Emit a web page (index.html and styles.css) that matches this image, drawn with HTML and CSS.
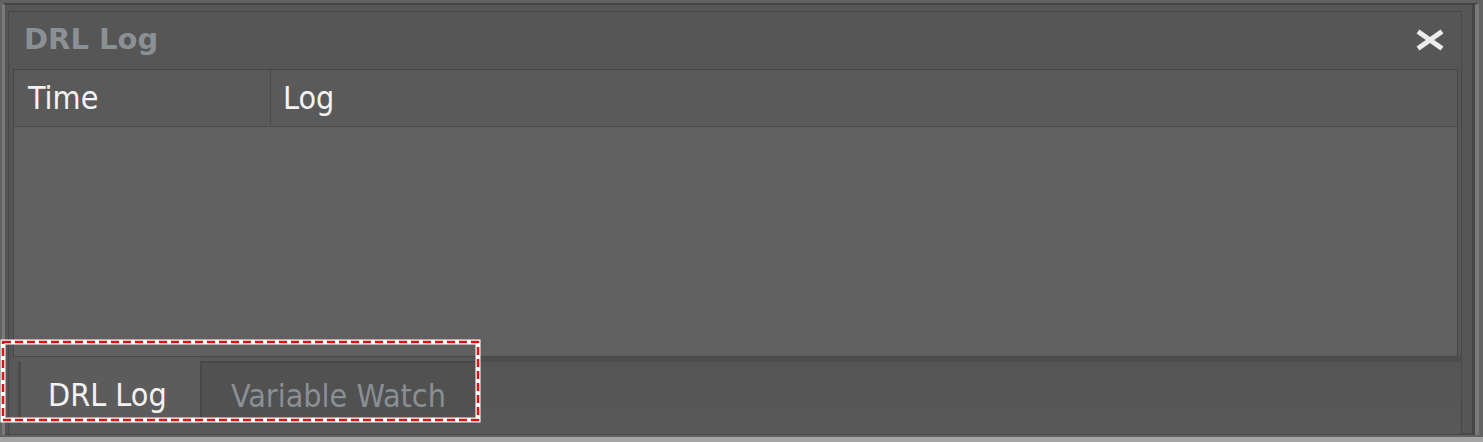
FILE: index.html
```html
<!DOCTYPE html>
<html lang="en">
<head>
<meta charset="utf-8">
<title>DRL Log</title>
<link rel="stylesheet" href="styles.css">
</head>
<body>
<div class="screen">
  <div class="frame">
    <div class="panel">
      <div class="titlebar">
        <span class="title">DRL Log</span>
        <span class="close" aria-label="Close">
          <svg width="32" height="22" viewBox="0 0 32 22">
            <path d="M4 2.5 L28 19.5 M28 2.5 L4 19.5" stroke="#ececec" stroke-width="5" stroke-linecap="butt" fill="none"/>
          </svg>
        </span>
      </div>
      <div class="table">
        <div class="thead">
          <div class="th th-time">Time</div>
          <div class="th th-log">Log</div>
        </div>
        <div class="tbody"></div>
      </div>
      <div class="tabstrip">
        <div class="tab tab-active">DRL Log</div>
        <div class="tab tab-inactive">Variable Watch</div>
        <div class="tab-rest"></div>
      </div>
    </div>
  </div>
  <svg class="annot" width="481" height="84" viewBox="0 0 481 84">
    <rect x="3" y="3" width="475" height="78" fill="none" stroke="#ffffff" stroke-width="5"/>
    <rect x="3" y="3" width="475" height="78" fill="none" stroke="#e01010" stroke-width="2.5" stroke-dasharray="8 4"/>
  </svg>
</div>
</body>
</html>
```

FILE: styles.css
```css
html, body {
  margin: 0;
  padding: 0;
  background: #5e5e5e;
}
body {
  font-family: "DejaVu Sans Condensed", "DejaVu Sans", "Noto Sans", sans-serif;
  font-stretch: condensed;
}
.screen {
  position: relative;
  width: 1483px;
  height: 442px;
  box-sizing: border-box;
  background: #626262;
  padding: 3px 4px 0 2px;
  border-bottom: 5px solid #a4a4a4;
  overflow: hidden;
}
.frame {
  height: 432px;
  box-sizing: border-box;
  background: #565656;
  border-top: 2px solid #454545;
  border-left: 3px solid #7a7a7a;
  border-right: 4px solid #7a7a7a;
  box-shadow: inset -3px 0 0 #464646, inset 0 -2px 0 #4a4a4a;
  padding: 6px 13px 0 3px;
}
.panel {
  display: flex;
  flex-direction: column;
  height: 424px;
  box-sizing: border-box;
  border: 1px solid #474747;
  background: #565656;
}
.titlebar {
  height: 57px;
  flex: none;
  display: flex;
  align-items: center;
  justify-content: space-between;
  padding: 0 15px 0 15px;
  box-sizing: border-box;
}
.title {
  font-family: "DejaVu Sans", "Noto Sans", sans-serif;
  font-stretch: normal;
  font-weight: bold;
  font-size: 29px;
  color: #8b9095;
  position: relative;
  top: -2px;
}
.close {
  display: flex;
  position: relative;
  top: -1px;
  filter: blur(0.6px);
}
.table {
  flex: none;
  margin: 0 3px 0 4px;
  height: 288px;
  box-sizing: border-box;
  border: 1px solid #474747;
  display: flex;
  flex-direction: column;
  background: #606060;
}
.thead {
  display: flex;
  height: 57px;
  flex: none;
  box-sizing: border-box;
  background: #5a5a5a;
  border-bottom: 1px solid #4b4b4b;
}
.th {
  display: flex;
  align-items: center;
  font-size: 32px;
  color: #f3f3f3;
  box-sizing: border-box;
}
.th-time {
  width: 257px;
  padding-left: 14px;
  border-right: 1px solid #4b4b4b;
}
.th-log {
  padding-left: 12px;
}
.tbody {
  flex: 1;
  background: #606060;
}
.tabstrip {
  flex: 1;
  display: flex;
  background: #585858;
}
.tab {
  display: flex;
  align-items: center;
  font-size: 32px;
  box-sizing: border-box;
  padding-top: 4px;
}
.tab-active {
  width: 182px;
  padding-left: 27px;
  margin-left: 9px;
  border-left: 3px solid #4c4c4c;
  margin-top: 4px;
  margin-bottom: 10px;
  background: #5c5c5c;
  color: #f2f2f2;
  position: relative;
}
.tab-active::before {
  content: "";
  position: absolute;
  left: -3px;
  right: 0;
  top: -4px;
  height: 4px;
  background: #5c5c5c;
}
.tab-inactive {
  width: 275px;
  padding-left: 29px;
  margin-top: 4px;
  margin-bottom: 10px;
  background: #515151;
  color: #8a8f94;
  border-left: 2px solid #484848;
  border-top: 2px solid #484848;
}
.tab-rest {
  flex: 1;
  border-top: 5px solid #4d4d4d;
  background: linear-gradient(#555555, #585858);
}
.annot {
  position: absolute;
  left: 0;
  top: 339px;
}
```
